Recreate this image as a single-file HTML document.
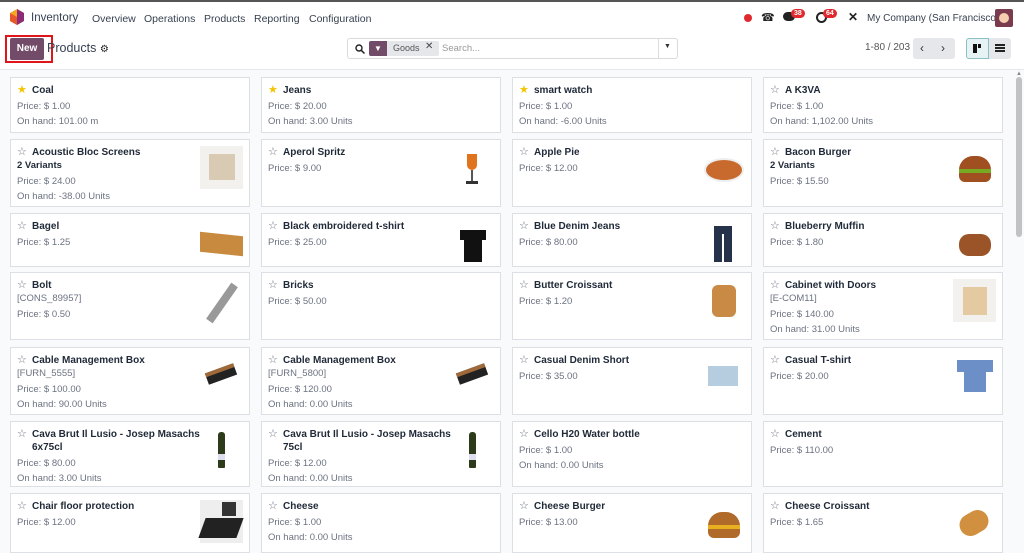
<!DOCTYPE html>
<html><head><meta charset="utf-8"><style>
*{box-sizing:border-box;margin:0;padding:0}
body{width:1024px;height:549px;overflow:hidden;font-family:"Liberation Sans",sans-serif;background:#f9fafb;position:relative;color:#374151}
.top{position:absolute;left:0;top:0;width:1024px;height:34px;background:#fff;border-top:2px solid #555}
.cp{position:absolute;left:0;top:34px;width:1024px;height:36px;background:#fff;border-bottom:1px solid #e5e7eb}
.nav{position:absolute;top:11px;font-size:10.5px;color:#374151;white-space:nowrap}
.card{position:absolute;background:#fff;border:1px solid #dcdfe3;padding:6px 6px 0 6px;width:240px}
.t{font-size:10px;font-weight:bold;color:#1f2937;line-height:13px;padding-left:15px;position:relative;padding-right:38px}
.t .s{position:absolute;left:0;top:0;font-size:11px;color:#6b7280;font-weight:normal}
.t .s.y{color:#f3c400}
.v{font-size:9.5px;font-weight:bold;color:#1f2937;line-height:13px}
.f{font-size:9.5px;color:#6b7280;line-height:15px}
.f1{margin-top:2px}
.im{position:absolute;right:6px;top:6px;width:43px;height:43px}
.badge{position:absolute;background:#e0292e;color:#fff;font-size:7px;border-radius:6px;padding:1px 3px;font-weight:bold}
</style></head><body>
<div class="top">
 <svg style="position:absolute;left:10px;top:7px" width="14" height="16" viewBox="0 0 14 16"><polygon points="7,0 14,4 14,12 7,16 0,12 0,4" fill="#f5a623"/><polygon points="7,0 14,4 14,12 7,16" fill="#8e2b79"/><polygon points="0,4 7,8 7,16 0,12" fill="#e6582a"/></svg>
 <div class="nav" style="left:31px;font-size:11.5px;top:10px">Inventory</div>
 <div class="nav" style="left:92px">Overview</div>
 <div class="nav" style="left:144px">Operations</div>
 <div class="nav" style="left:204px">Products</div>
 <div class="nav" style="left:254px">Reporting</div>
 <div class="nav" style="left:309px">Configuration</div>
 <div style="position:absolute;left:744px;top:12px;width:8px;height:8px;border-radius:50%;background:#e0292e"></div>
 <div style="position:absolute;left:761px;top:9px;font-size:11px;color:#222">☎</div>
 <div style="position:absolute;left:783px;top:10px;width:12px;height:9px;background:#222;border-radius:5px"></div>
 <div class="badge" style="left:791px;top:7px">38</div>
 <div style="position:absolute;left:816px;top:10px;width:11px;height:11px;border:2px solid #222;border-radius:50%"></div>
 <div class="badge" style="left:823px;top:7px">64</div>
 <div style="position:absolute;left:848px;top:8px;font-size:12px;color:#222;font-weight:bold">✕</div>
 <div class="nav" style="left:867px;font-size:10px;top:11px">My Company (San Francisco)</div>
 <div style="position:absolute;left:995px;top:7px;width:18px;height:18px;background:#7a3b4f;border-radius:2px"><div style="margin:4px;width:10px;height:10px;background:#f5d0b0;border-radius:50%"></div></div>
</div>
<div class="cp">
 <div style="position:absolute;left:5px;top:1px;width:48px;height:28px;border:2px solid #e0151b"></div>
 <div style="position:absolute;left:10px;top:4px;width:34px;height:22px;background:#714b67;color:#fff;font-size:10px;font-weight:bold;line-height:22px;text-align:center;border-radius:2px">New</div>
 <div style="position:absolute;left:47px;top:7px;font-size:12.5px;color:#374151">Products <span style="font-size:10px;color:#222">⚙</span></div>
 <div style="position:absolute;left:347px;top:4px;width:331px;height:21px;border:1px solid #d8dadd;border-radius:3px;background:#fff">
  <svg style="position:absolute;left:7px;top:5px" width="10" height="10" viewBox="0 0 10 10"><circle cx="4" cy="4" r="3" stroke="#222" stroke-width="1.4" fill="none"/><line x1="6.3" y1="6.3" x2="9.5" y2="9.5" stroke="#222" stroke-width="1.5"/></svg>
  <div style="position:absolute;left:21px;top:2px;width:70px;height:15px;background:#e5e7eb;border-radius:2px">
   <div style="width:18px;height:15px;background:#714b67;border-radius:2px 0 0 2px;color:#fff;font-size:8px;text-align:center;line-height:15px">▼</div>
   <span style="position:absolute;left:24px;top:2px;font-size:9px;color:#555">Goods</span>
   <span style="position:absolute;left:56px;top:0px;font-size:10px;color:#444">✕</span>
  </div>
  <span style="position:absolute;left:94px;top:4px;font-size:9.5px;color:#999">Search...</span>
  <div style="position:absolute;left:310px;top:0;width:1px;height:19px;background:#ddd"></div>
  <span style="position:absolute;left:316px;top:4px;font-size:7px;color:#333">▼</span>
 </div>
 <div style="position:absolute;left:865px;top:8px;font-size:10px;color:#555">1-80 / 203</div>
 <div style="position:absolute;left:913px;top:4px;width:42px;height:21px;background:#e5e7eb;border-radius:3px;font-size:12px;color:#333;line-height:21px"><span style="position:absolute;left:7px">‹</span><span style="position:absolute;left:28px">›</span></div>
 <div style="position:absolute;left:966px;top:4px;width:23px;height:21px;background:#e6f2f3;border:1px solid #8cc0c4;border-radius:3px 0 0 3px"><div style="position:absolute;left:6px;top:5px;width:4px;height:9px;background:#111"></div><div style="position:absolute;left:11px;top:5px;width:3px;height:4px;background:#111"></div></div>
 <div style="position:absolute;left:989px;top:4px;width:22px;height:21px;background:#e5e7eb;border-radius:0 3px 3px 0"><div style="position:absolute;left:6px;top:6px;width:10px;height:8px;border-top:2px solid #222;border-bottom:2px solid #222"></div><div style="position:absolute;left:6px;top:9px;width:10px;height:2px;background:#222"></div></div>
</div>
<div style="position:absolute;left:1016px;top:77px;width:6px;height:160px;background:#c2c2c2;border-radius:3px"></div>
<div style="position:absolute;left:1016px;top:71px;font-size:6px;color:#888">▲</div>

<div class="card" style="left:10px;top:77px;height:56px"><div class="t"><span class="s y">★</span>Coal</div><div class="f f1">Price: $ 1.00</div><div class="f">On hand: 101.00 m</div></div>
<div class="card" style="left:261px;top:77px;height:56px"><div class="t"><span class="s y">★</span>Jeans</div><div class="f f1">Price: $ 20.00</div><div class="f">On hand: 3.00 Units</div></div>
<div class="card" style="left:512px;top:77px;height:56px"><div class="t"><span class="s y">★</span>smart watch</div><div class="f f1">Price: $ 1.00</div><div class="f">On hand: -6.00 Units</div></div>
<div class="card" style="left:763px;top:77px;height:56px"><div class="t"><span class="s">☆</span>A K3VA</div><div class="f f1">Price: $ 1.00</div><div class="f">On hand: 1,102.00 Units</div></div>

<div class="card" style="left:10px;top:139px;height:68px"><div class="t"><span class="s">☆</span>Acoustic Bloc Screens</div><div class="v">2 Variants</div><div class="f f1">Price: $ 24.00</div><div class="f">On hand: -38.00 Units</div><div class="im" style="background:#f3f1ee"><div style="margin:8px 9px;width:26px;height:26px;background:#d9cbb3"></div></div></div>
<div class="card" style="left:261px;top:139px;height:68px"><div class="t"><span class="s">☆</span>Aperol Spritz</div><div class="f f1">Price: $ 9.00</div><div class="im"><div style="position:absolute;left:16px;top:8px;width:10px;height:16px;background:#e0731e;border-radius:0 0 5px 5px"></div><div style="position:absolute;left:20px;top:24px;width:2px;height:12px;background:#555"></div><div style="position:absolute;left:15px;top:35px;width:12px;height:3px;background:#333"></div></div></div>
<div class="card" style="left:512px;top:139px;height:68px"><div class="t"><span class="s">☆</span>Apple Pie</div><div class="f f1">Price: $ 12.00</div><div class="im"><div style="position:absolute;left:2px;top:12px;width:40px;height:24px;background:#c86a2e;border-radius:50%;border:2px solid #eee"></div></div></div>
<div class="card" style="left:763px;top:139px;height:68px"><div class="t"><span class="s">☆</span>Bacon Burger</div><div class="v">2 Variants</div><div class="f f1">Price: $ 15.50</div><div class="im"><div style="position:absolute;left:6px;top:10px;width:32px;height:26px;background:#a05020;border-radius:14px 14px 6px 6px"></div><div style="position:absolute;left:6px;top:23px;width:32px;height:4px;background:#7a2"></div></div></div>

<div class="card" style="left:10px;top:213px;height:54px"><div class="t"><span class="s">☆</span>Bagel</div><div class="f f1">Price: $ 1.25</div><div class="im"><div style="position:absolute;left:0;top:14px;width:43px;height:20px;background:#c88a3e;transform:skewY(6deg)"></div></div></div>
<div class="card" style="left:261px;top:213px;height:54px"><div class="t"><span class="s">☆</span>Black embroidered t-shirt</div><div class="f f1">Price: $ 25.00</div><div class="im"><div style="position:absolute;left:13px;top:10px;width:18px;height:32px;background:#111"></div><div style="position:absolute;left:9px;top:10px;width:26px;height:10px;background:#111"></div></div></div>
<div class="card" style="left:512px;top:213px;height:54px"><div class="t"><span class="s">☆</span>Blue Denim Jeans</div><div class="f f1">Price: $ 80.00</div><div class="im"><div style="position:absolute;left:12px;top:6px;width:8px;height:36px;background:#26324a"></div><div style="position:absolute;left:22px;top:6px;width:8px;height:36px;background:#26324a"></div><div style="position:absolute;left:12px;top:6px;width:18px;height:8px;background:#26324a"></div></div></div>
<div class="card" style="left:763px;top:213px;height:54px"><div class="t"><span class="s">☆</span>Blueberry Muffin</div><div class="f f1">Price: $ 1.80</div><div class="im"><div style="position:absolute;left:6px;top:14px;width:32px;height:22px;background:#9a5428;border-radius:10px"></div></div></div>

<div class="card" style="left:10px;top:272px;height:68px"><div class="t"><span class="s">☆</span>Bolt</div><div class="f" style="line-height:13px">[CONS_89957]</div><div class="f f1">Price: $ 0.50</div><div class="im"><div style="position:absolute;left:18px;top:2px;width:8px;height:44px;background:#999;transform:rotate(35deg)"></div></div></div>
<div class="card" style="left:261px;top:272px;height:68px"><div class="t"><span class="s">☆</span>Bricks</div><div class="f f1">Price: $ 50.00</div></div>
<div class="card" style="left:512px;top:272px;height:68px"><div class="t"><span class="s">☆</span>Butter Croissant</div><div class="f f1">Price: $ 1.20</div><div class="im"><div style="position:absolute;left:10px;top:6px;width:24px;height:32px;background:#c98a45;border-radius:6px"></div></div></div>
<div class="card" style="left:763px;top:272px;height:68px"><div class="t"><span class="s">☆</span>Cabinet with Doors</div><div class="f" style="line-height:13px">[E-COM11]</div><div class="f f1">Price: $ 140.00</div><div class="f">On hand: 31.00 Units</div><div class="im" style="background:#f3f1ee"><div style="position:absolute;left:10px;top:8px;width:24px;height:28px;background:#e5c9a0"></div></div></div>

<div class="card" style="left:10px;top:347px;height:68px"><div class="t"><span class="s">☆</span>Cable Management Box</div><div class="f" style="line-height:13px">[FURN_5555]</div><div class="f f1">Price: $ 100.00</div><div class="f">On hand: 90.00 Units</div><div class="im"><div style="position:absolute;left:6px;top:14px;width:30px;height:12px;background:#222;transform:rotate(-20deg);border-top:4px solid #a0693a"></div></div></div>
<div class="card" style="left:261px;top:347px;height:68px"><div class="t"><span class="s">☆</span>Cable Management Box</div><div class="f" style="line-height:13px">[FURN_5800]</div><div class="f f1">Price: $ 120.00</div><div class="f">On hand: 0.00 Units</div><div class="im"><div style="position:absolute;left:6px;top:14px;width:30px;height:12px;background:#222;transform:rotate(-20deg);border-top:4px solid #a0693a"></div></div></div>
<div class="card" style="left:512px;top:347px;height:68px"><div class="t"><span class="s">☆</span>Casual Denim Short</div><div class="f f1">Price: $ 35.00</div><div class="im"><div style="position:absolute;left:6px;top:12px;width:30px;height:20px;background:#b6cde0"></div></div></div>
<div class="card" style="left:763px;top:347px;height:68px"><div class="t"><span class="s">☆</span>Casual T-shirt</div><div class="f f1">Price: $ 20.00</div><div class="im"><div style="position:absolute;left:11px;top:6px;width:22px;height:32px;background:#6d8fc7"></div><div style="position:absolute;left:4px;top:6px;width:36px;height:12px;background:#6d8fc7"></div></div></div>

<div class="card" style="left:10px;top:421px;height:66px"><div class="t"><span class="s">☆</span>Cava Brut Il Lusio - Josep Masachs 6x75cl</div><div class="f f1">Price: $ 80.00</div><div class="f">On hand: 3.00 Units</div><div class="im"><div style="position:absolute;left:18px;top:4px;width:7px;height:36px;background:#2e3b1a;border-radius:3px 3px 1px 1px"></div><div style="position:absolute;left:18px;top:26px;width:7px;height:6px;background:#dde"></div></div></div>
<div class="card" style="left:261px;top:421px;height:66px"><div class="t"><span class="s">☆</span>Cava Brut Il Lusio - Josep Masachs 75cl</div><div class="f f1">Price: $ 12.00</div><div class="f">On hand: 0.00 Units</div><div class="im"><div style="position:absolute;left:18px;top:4px;width:7px;height:36px;background:#2e3b1a;border-radius:3px 3px 1px 1px"></div><div style="position:absolute;left:18px;top:26px;width:7px;height:6px;background:#dde"></div></div></div>
<div class="card" style="left:512px;top:421px;height:66px"><div class="t"><span class="s">☆</span>Cello H20 Water bottle</div><div class="f f1">Price: $ 1.00</div><div class="f">On hand: 0.00 Units</div></div>
<div class="card" style="left:763px;top:421px;height:66px"><div class="t"><span class="s">☆</span>Cement</div><div class="f f1">Price: $ 110.00</div></div>

<div class="card" style="left:10px;top:493px;height:60px"><div class="t"><span class="s">☆</span>Chair floor protection</div><div class="f f1">Price: $ 12.00</div><div class="im" style="background:#eee"><div style="position:absolute;left:2px;top:18px;width:38px;height:20px;background:#222;transform:skewX(-20deg)"></div><div style="position:absolute;left:22px;top:2px;width:14px;height:14px;background:#333"></div></div></div>
<div class="card" style="left:261px;top:493px;height:60px"><div class="t"><span class="s">☆</span>Cheese</div><div class="f f1">Price: $ 1.00</div><div class="f">On hand: 0.00 Units</div></div>
<div class="card" style="left:512px;top:493px;height:60px"><div class="t"><span class="s">☆</span>Cheese Burger</div><div class="f f1">Price: $ 13.00</div><div class="im"><div style="position:absolute;left:6px;top:12px;width:32px;height:26px;background:#b06a2a;border-radius:14px 14px 6px 6px"></div><div style="position:absolute;left:6px;top:25px;width:32px;height:4px;background:#e8b020"></div></div></div>
<div class="card" style="left:763px;top:493px;height:60px"><div class="t"><span class="s">☆</span>Cheese Croissant</div><div class="f f1">Price: $ 1.65</div><div class="im"><div style="position:absolute;left:6px;top:12px;width:30px;height:22px;background:#d09040;border-radius:12px;transform:rotate(-30deg)"></div></div></div>
</body></html>
